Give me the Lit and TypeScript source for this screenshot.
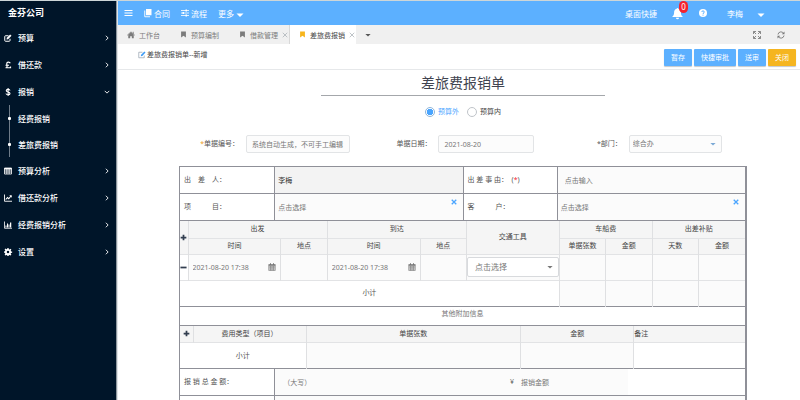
import { LitElement, html, css, svg, nothing } from "lit";
import { customElement, property, state } from "lit/decorators.js";
import { classMap } from "lit/directives/class-map.js";

const glyphs: Record<string, unknown> = {
  edit: svg`<path d="M12 9.5V13a1.5 1.5 0 0 1-1.500 1.500H3A1.500 1.500 0 0 1 1.500 13V5A1.500 1.500 0 0 1 3 3.500h6" fill="none" stroke="currentColor" stroke-width="2"/><path d="M5 11l.6-3.300L12.300 1l2.700 2.700-6.700 6.700z" fill="currentColor"/>`,
  editThin: svg`<path d="M12.500 9v4.500h-11v-11H9" fill="none" stroke="#8a97a5" stroke-width="1.300"/><path d="M5.500 10.500l.7-3L12.800 1 15 3.200 8.500 9.800z" fill="#3d9bf5"/>`,
  pound: svg`<path d="M12.500 4.500C11.500 1.500 5.500 1 5.500 5.500c0 3 1.500 5 0 8H3M3 13.500h10v-2.500M3 8.500h7" fill="none" stroke="currentColor" stroke-width="2.400"/>`,
  dollar: svg`<path d="M12 5C11.500 2 4.500 2 4.500 5.300 4.500 8.500 12 7.500 12 11c0 3.500-7.500 3.500-8 0M8.200 0v16" fill="none" stroke="currentColor" stroke-width="2.200"/>`,
  table: svg`<path d="M1 2h14v12H1zM1 6h14M1 10h14M5.700 2v12M10.300 2v12" fill="none" stroke="currentColor" stroke-width="1.600"/><path d="M1 2h14v2.500H1z" fill="currentColor"/>`,
  line: svg`<path d="M1 1v13.500h15" fill="none" stroke="currentColor" stroke-width="1.800"/><path d="M3.500 11l3.500-4 2.500 2.500L14 4" fill="none" stroke="currentColor" stroke-width="2.200"/><path d="M10.500 2.500H15.500V7.500z" fill="currentColor"/>`,
  bars: svg`<path d="M1 1v13.500h15" fill="none" stroke="currentColor" stroke-width="1.600"/><path d="M3 9h2v4H3zM6 5h2v8H6zM9 7h2v6H9zM12 3h2.500v10H12z" fill="currentColor"/>`,
  gear: svg`<path d="M6.800 0h2.400l.4 2.300 1.600.7L13.100 1.600l1.700 1.700L13.400 5.200l.7 1.600 2.200.4v2.400l-2.200.4-.7 1.600 1.400 1.900-1.700 1.700-1.900-1.400-1.600.7L9.200 16H6.800l-.4-1.500-1.600-.7-1.900 1.400-1.700-1.700 1.400-1.900-.7-1.600L0 9.200V6.800l1.900-.4.700-1.600L1.200 2.900l1.700-1.700 1.900 1.400 1.600-.7zM8 5.500a2.500 2.500 0 1 0 0 5 2.500 2.500 0 0 0 0-5z" fill="currentColor" fill-rule="evenodd"/>`,
  menu: svg`<path d="M0 3h16M0 8h16M0 13h16" stroke="currentColor" stroke-width="2.400"/>`,
  book: svg`<path d="M4 0h11v12.500H4z" fill="currentColor"/><path d="M1.500 3v12.500H12" fill="none" stroke="currentColor" stroke-width="1.800"/>`,
  sliders: svg`<path d="M0 3h16M0 8h16M0 13h16" stroke="currentColor" stroke-width="1.600"/><path d="M9 1h3v4H9zM3 6h3v4H3zM9 11h3v4H9z" fill="currentColor"/>`,
  bell: svg`<path d="M8 0c.8 0 1.200.6 1.200 1.200C12 2 13 4 13 7c0 3 1 4.500 2.800 6H.2C2 11.500 3 10 3 7c0-3 1-5 3.800-5.800C6.800.6 7.200 0 8 0zM5.800 14h4.400a2.200 2.200 0 0 1-4.400 0z" fill="currentColor"/>`,
  help: svg`<circle cx="8" cy="8" r="8" fill="currentColor"/><path d="M5.500 6C5.700 2.800 10.500 3 10.500 6 10.500 7.800 8 7.800 8 10M8 11.300v2" fill="none" stroke="#5cb0ff" stroke-width="2"/>`,
  home: svg`<path d="M8 2.500l5.500 5V14.500H9.700v-4H6.300v4H2.500v-7z" fill="currentColor"/><path d="M.5 8.500L8 1.700l7.500 6.800M12.500 1.500V6" fill="none" stroke="currentColor" stroke-width="1.700"/>`,
  mark: svg`<path d="M2.500 1h11v14L8 11l-5.500 4z" fill="currentColor"/>`,
  close: svg`<path d="M2 2l12 12M14 2L2 14" stroke="currentColor" stroke-width="2"/>`,
  closeBold: svg`<path d="M2 2l12 12M14 2L2 14" stroke="currentColor" stroke-width="3.500"/>`,
  caret: svg`<path d="M1 5h14l-7 7z" fill="currentColor"/>`,
  right: svg`<path d="M5 2l6 6-6 6" fill="none" stroke="currentColor" stroke-width="2.400"/>`,
  down: svg`<path d="M2 5l6 6 6-6" fill="none" stroke="currentColor" stroke-width="2.400"/>`,
  expand: svg`<path d="M1 6V1h5M10 1h5v5M15 10v5h-5M6 15H1v-5M1.500 1.500l4.500 4.500M14.500 1.500L10 6M14.500 14.500L10 10M1.500 14.500L6 10" fill="none" stroke="currentColor" stroke-width="1.700"/>`,
  refresh: svg`<path d="M2 7a6 6 0 0 1 11-2.500M14 9a6 6 0 0 1-11 2.500" fill="none" stroke="currentColor" stroke-width="1.800"/><path d="M15 1v5.500H9.500zM1 15V9.500h5.500z" fill="currentColor"/>`,
  plus: svg`<path d="M8 1.500v13M1.500 8h13" stroke="currentColor" stroke-width="4"/>`,
  minus: svg`<path d="M1 8h14" stroke="currentColor" stroke-width="4"/>`,
  cal: svg`<path d="M1.500 3h13v12h-13zM1.500 6.500h13M1.500 9.500h13M1.500 12.200h13M5 6v9M8 6v9M11 6v9" fill="none" stroke="currentColor" stroke-width="1.200"/><path d="M1.500 3h13v2.500h-13zM4 .5h2V4H4zM10 .5h2V4h-2z" fill="currentColor"/>`,
};

const base = css`
  * { box-sizing: border-box; }
  button, input, select { font: inherit; color: inherit; margin: 0; padding: 0; border: 0; background: none; min-width: 0; border-radius: 0; }
  input:focus, select:focus { outline: none; }
  button { cursor: pointer; }
  a { color: inherit; text-decoration: none; }
`;

@customElement("ui-glyph")
class UiGlyph extends LitElement {
  @property() name = "";
  static styles = css`
    :host { display: block; flex: none; width: 8px; height: 8px; }
    .art { display: block; width: 100%; height: 100%; overflow: visible; }
  `;
  render() {
    return html`<svg class="art" viewBox="0 0 16 16" aria-hidden="true">${glyphs[this.name]}</svg>`;
  }
}

@customElement("side-menu")
class SideMenu extends LitElement {
  static styles = [base, css`
    :host { display: block; background: #001529; color: #fff; border-right: 1px solid #8f979e; }
    .brand { height: 23px; line-height: 23px; padding-left: 8px; font-size: 9px; font-weight: 700; }
    .item { display: flex; align-items: center; height: 27px; padding: 0 6px 0 4px; font-size: 8px; font-weight: 500; }
    .sub { height: 26px; }
    .name { flex: 1; padding-left: 6px; }
    .arrow { width: 6px; height: 6px; }
    .rail { align-self: stretch; width: 8px; display: grid; place-items: center; background: linear-gradient(#6f7c89, #6f7c89) 5px 0 / 1px 100% no-repeat; }
    .dot { width: 3px; height: 3px; border-radius: 1px; margin-left: 3px; background: #fff; }
  `];
  private items = [
    ["edit", "预算", "right"], ["pound", "借还款", "right"], ["dollar", "报销", "down"],
    ["", "经费报销", ""], ["", "差旅费报销", ""],
    ["table", "预算分析", "right"], ["line", "借还款分析", "right"], ["bars", "经费报销分析", "right"], ["gear", "设置", "right"],
  ];
  render() {
    return html`<div class="brand">金芬公司</div>
      <nav>${this.items.map(([icon, name, arrow]) => html`
        <a class=${classMap({ item: true, sub: !icon })} href="#">
          ${icon ? html`<ui-glyph name=${icon}></ui-glyph>` : html`<span class="rail"><span class="dot"></span></span>`}
          <span class="name">${name}</span>
          ${arrow ? html`<ui-glyph class="arrow" name=${arrow}></ui-glyph>` : nothing}
        </a>`)}</nav>`;
  }
}

@customElement("top-bar")
class TopBar extends LitElement {
  static styles = [base, css`
    :host { display: flex; align-items: center; height: 24px; padding: 0 35px 0 6px; background: #5cb0ff; color: #fff; font-size: 8px; }
    .menu { margin-right: 11px; }
    .menu ui-glyph { width: 9px; }
    .link { display: flex; align-items: center; gap: 2px; margin-right: 11px; }
    .space { flex: 1; }
    .bell { position: relative; margin: 0 16px 0 15px; }
    .bell ui-glyph { width: 11px; height: 11px; }
    .badge { position: absolute; left: 7px; top: -7px; width: 9px; height: 12px; line-height: 12px; border-radius: 5px; background: #f5222d; font-size: 8px; text-align: center; }
    .user { display: flex; align-items: center; gap: 14px; margin-left: 20px; }
    .caret { margin-top: 3px; }
  `];
  render() {
    return html`
      <button class="menu" aria-label="菜单"><ui-glyph name="menu"></ui-glyph></button>
      <a class="link" href="#"><ui-glyph name="book"></ui-glyph>合同</a>
      <a class="link" href="#"><ui-glyph name="sliders"></ui-glyph>流程</a>
      <a class="link" href="#">更多<ui-glyph class="caret" name="caret"></ui-glyph></a>
      <span class="space"></span>
      <a href="#">桌面快捷</a>
      <button class="bell" aria-label="通知"><ui-glyph name="bell"></ui-glyph><span class="badge">0</span></button>
      <button aria-label="帮助"><ui-glyph name="help"></ui-glyph></button>
      <button class="user">李梅<ui-glyph class="caret" name="caret"></ui-glyph></button>`;
  }
}

@customElement("tab-strip")
class TabStrip extends LitElement {
  static styles = [base, css`
    :host { display: flex; height: 19px; padding-right: 15px; background: #f0f0f0; color: #7c7c7c; font-size: 7px; }
    .tab { display: flex; align-items: center; gap: 4px; padding: 0 9px; }
    .mark { width: 7px; height: 7px; }
    .shut { width: 6px; height: 6px; color: #a9b0b6; }
    .shut ui-glyph { width: 6px; height: 6px; }
    .closable { padding-right: 1px; }
    .plain { padding-right: 11px; }
    .on { background: #fff; color: #444; border-left: 1px solid #d8d8d8; }
    .on .mark { color: #f7b51c; }
    .more { padding: 0 9px; color: #555; }
    .more ui-glyph { width: 6px; height: 6px; }
    .space { flex: 1; }
    .tool { margin-left: 16px; color: #777; }
  `];
  private tabs = [
    { icon: "home", name: "工作台", close: false, on: false },
    { icon: "mark", name: "预算编制", close: false, on: false },
    { icon: "mark", name: "借款管理", close: true, on: false },
    { icon: "mark", name: "差旅费报销", close: true, on: true },
  ];
  render() {
    return html`${this.tabs.map((t) => html`
        <div class=${classMap({ tab: true, closable: t.close, plain: !t.close, on: t.on })}>
          <ui-glyph class=${t.icon === "home" ? "home" : "mark"} name=${t.icon}></ui-glyph><a href="#">${t.name}</a>
          ${t.close ? html`<button class="shut" aria-label="关闭标签"><ui-glyph name="close"></ui-glyph></button>` : nothing}
        </div>`)}
      <button class="more" aria-label="更多标签"><ui-glyph name="caret"></ui-glyph></button>
      <span class="space"></span>
      <button class="tool" aria-label="全屏"><ui-glyph name="expand"></ui-glyph></button>
      <button class="tool" aria-label="刷新"><ui-glyph name="refresh"></ui-glyph></button>`;
  }
}

@customElement("travel-form")
class TravelForm extends LitElement {
  @state() private budget = "out";
  static styles = [base, css`
    :host { display: block; font-size: 7px; color: #555; line-height: 10px; }
    .crumb { display: flex; align-items: center; height: 26px; padding: 0 4px 0 20px; border-bottom: 1px solid #e6e8ea; color: #444; }
    .crumb .where { display: flex; align-items: center; gap: 1px; flex: 1; padding-bottom: 3px; }
    .actions { display: flex; gap: 2px; margin-top: 2px; }
    .action { height: 17px; padding: 0 7px; border-radius: 1px; background: #5cb0ff; color: #fff; box-shadow: 0 1px 1px #c4c8cc; }
    .warn { background: #f5b520; }
    .sheet { padding: 0 53px 0 61px; }
    .title { width: 50%; margin: 0 auto; padding-top: 2px; height: 26px; line-height: 22px; border-bottom: 1px solid #a4a7ab; text-align: center; font-size: 14px; font-weight: 400; color: #3f4450; }
    .radios { display: flex; justify-content: center; gap: 8px; height: 32px; align-items: center; }
    .radio { display: flex; align-items: center; gap: 3px; color: #444; }
    .radio input { appearance: none; width: 10px; height: 10px; border: 1px solid #bfc4c9; border-radius: 50%; background: #fff; }
    .radio input:checked { border-color: #8db4da; background: radial-gradient(#4aa5ff 0 3px, #fff 3px); }
    .radio.on { color: #4aa5ff; }
    .head { display: grid; grid-template-columns: 67fr 104fr 88fr 95fr 95fr 93fr 25fr; align-items: center; margin-bottom: 13px; padding-top: 7px; }
    .head label { text-align: right; padding-right: 7px; }
    .star { color: #f0a020; }
    .red { color: #f5222d; }
    .box { width: 100%; height: 18px; padding: 0 5px; border: 1px solid #e2e4e6; border-radius: 2px; background: #fcfcfc; color: #777; }
    .box::placeholder, .fill::placeholder { color: #777; opacity: 1; }
    .pick { position: relative; }
    .pick select { appearance: none; width: 100%; padding-left: 3px; }
    .pick ui-glyph { position: absolute; right: 6px; top: 6px; width: 6px; height: 6px; color: #7ba9d6; pointer-events: none; }
    .paper { border: 1px solid #8f9098; border-width: 1px 2px 0 1px; }
    .pair { display: grid; grid-template-columns: 1fr 2fr 1fr 2fr; border-bottom: 1px solid #8f9098; }
    .pair > * { height: 26px; }
    .pair > * + * { border-left: 1px solid #8f9098; }
    .cap { display: flex; align-items: center; padding-left: 4px; white-space: pre; }
    .cell { display: flex; background: #fbfbfb; }
    .grey { background: #f3f3f3; color: #333; }
    .fill { flex: 1; width: 100%; height: 100%; padding: 0 3px; }
    .deep { padding-left: 7px; }
    .clear { align-self: flex-start; margin: 5px 6px 0 0; color: #4aa5ff; }
    .clear ui-glyph { width: 6px; height: 6px; }
    table { width: 100%; table-layout: fixed; border-collapse: collapse; border-bottom: 1px solid #8f9098; }
    th, td { padding: 0; border-left: 1px solid #dfe0e2; border-top: 1px solid #e2e3e5; text-align: center; font-weight: 400; }
    th { height: 17px; background: #f5f5f5; color: #444; }
    .under th { height: 16px; }
    .first, th.first { border-left: 0; }
    .lead > * { border-top: 0; }
    td { height: 26px; background: #fbfbfb; }
    td.white { background: #fff; }
    .narrow { width: 8px; }
    .slim { width: 13px; }
    .tool { display: block; margin: 0 auto; color: #333f50; }
    .tool ui-glyph { width: 7px; height: 7px; }
    .when { display: flex; align-items: center; padding: 0 4px 0 0; color: #777; }
    .when .fill { height: 16px; padding-left: 4px; }
    td .box { height: 20px; background: #fff; border-color: #d8dadd; font-size: 8px; }
    td .pick select { padding-left: 7px; }
    td .pick ui-glyph { color: #777; top: 7px; }
    .note { height: 19px; line-height: 14px; text-align: center; border-bottom: 1px solid #8f9098; color: #777; }
    .kind { width: 20%; }
    .count { width: 38%; }
    .left { text-align: left; }
    .total { grid-template-columns: 1fr 5fr; }
    .sum { display: grid; grid-template-columns: 50fr 25fr 25fr; align-items: center; background: linear-gradient(90deg, #fbfbfb 75%, #fff 75%); }
    .sum > .fill { padding-left: 8px; }
    .money { display: flex; align-items: center; height: 100%; }
  `];
  private when() {
    return html`<td colspan="2"><div class="when"><input class="fill" aria-label="时间" value="2021-08-20 17:38"><ui-glyph name="cal"></ui-glyph></div></td><td></td>`;
  }
  private radio(value: string, text: string) {
    return html`<label class=${classMap({ radio: true, on: this.budget === value })}>
      <input type="radio" name="budget" .checked=${this.budget === value} @change=${() => (this.budget = value)}>${text}</label>`;
  }
  private clear() {
    return html`<button class="clear" aria-label="清除"><ui-glyph name="closeBold"></ui-glyph></button>`;
  }
  render() {
    return html`
      <div class="crumb">
        <span class="where"><ui-glyph name="editThin"></ui-glyph>差旅费报销单--新增</span>
        <div class="actions">
          <button class="action">暂存</button><button class="action">快捷审批</button><button class="action">送审</button><button class="action warn">关闭</button>
        </div>
      </div>
      <div class="sheet">
        <h1 class="title">差旅费报销单</h1>
        <div class="radios">${this.radio("out", "预算外")}${this.radio("in", "预算内")}</div>
        <div class="head">
          <label for="no"><span class="star">*</span>单据编号：</label><input id="no" class="box" placeholder="系统自动生成，不可手工编辑">
          <label for="day">单据日期：</label><input id="day" class="box" value="2021-08-20">
          <label for="dept">*部门：</label><span class="pick"><select id="dept" class="box"><option>综合办</option></select><ui-glyph name="caret"></ui-glyph></span>
        </div>
        <div class="paper">
          <div class="pair">
            <label class="cap" for="who">出　差　人：</label><span class="cell grey"><input id="who" class="fill" value="李梅"></span>
            <label class="cap" for="why">出 差 事 由：  (<span class="red">*</span>)</label><span class="cell"><input id="why" class="fill deep" placeholder="点击输入"></span>
          </div>
          <div class="pair">
            <label class="cap" for="proj">项　　　目：</label><span class="cell"><input id="proj" class="fill" placeholder="点击选择">${this.clear()}</span>
            <label class="cap" for="cust">客　　　户：</label><span class="cell"><input id="cust" class="fill" placeholder="点击选择">${this.clear()}</span>
          </div>
          <table>
            <colgroup><col class="narrow">${Array.from({ length: 12 }, () => html`<col>`)}</colgroup>
            <tr class="lead">
              <th class="first" rowspan="2"><button class="tool" aria-label="添加行程"><ui-glyph name="plus"></ui-glyph></button></th>
              <th colspan="3">出发</th><th colspan="3">到达</th><th colspan="2" rowspan="2">交通工具</th><th colspan="2">车船费</th><th colspan="2">出差补贴</th>
            </tr>
            <tr class="under"><th colspan="2">时间</th><th>地点</th><th colspan="2">时间</th><th>地点</th><th>单据张数</th><th>金额</th><th>天数</th><th>金额</th></tr>
            <tr>
              <td class="first white"><button class="tool" aria-label="删除行程"><ui-glyph name="minus"></ui-glyph></button></td>
              ${this.when()}${this.when()}
              <td colspan="2"><div class="pick"><select class="box" aria-label="交通工具"><option>点击选择</option></select><ui-glyph name="caret"></ui-glyph></div></td>
              <td></td><td></td><td></td><td></td>
            </tr>
            <tr><td class="first white" colspan="9">小计</td><td></td><td></td><td></td><td></td></tr>
          </table>
          <div class="note">其他附加信息</div>
          <table>
            <colgroup><col class="slim"><col class="kind"><col class="count"><col class="kind"><col></colgroup>
            <tr class="lead"><th class="first"><button class="tool" aria-label="添加费用"><ui-glyph name="plus"></ui-glyph></button></th><th>费用类型（项目）</th><th>单据张数</th><th>金额</th><th class="left">备注</th></tr>
            <tr><td class="first white" colspan="2">小计</td><td></td><td></td><td class="white"></td></tr>
          </table>
          <div class="pair total">
            <label class="cap" for="upper">报 销 总 金 额：</label>
            <div class="sum"><input id="upper" class="fill" placeholder="（大写）"><label class="money">¥<input class="fill deep" aria-label="报销金额" placeholder="报销金额"></label></div>
          </div>
          <div class="pair total"><span class="cap"></span><span class="cell"></span></div>
        </div>
      </div>`;
  }
}

@customElement("app-root")
class AppRoot extends LitElement {
  static styles = css`
    :host { display: grid; grid-template-columns: 117px minmax(0, 1fr); box-sizing: border-box; height: 100vh; overflow: hidden; border-top: 1px solid #cdd6d8; background: #fff; font-family: "Noto Sans", "Noto Sans CJK SC", sans-serif; }
    .main { border-left: 1px solid #dfe3e6; overflow: hidden; }
  `;
  render() {
    return html`<side-menu></side-menu>
      <main class="main"><top-bar></top-bar><tab-strip></tab-strip><travel-form></travel-form></main>`;
  }
}
